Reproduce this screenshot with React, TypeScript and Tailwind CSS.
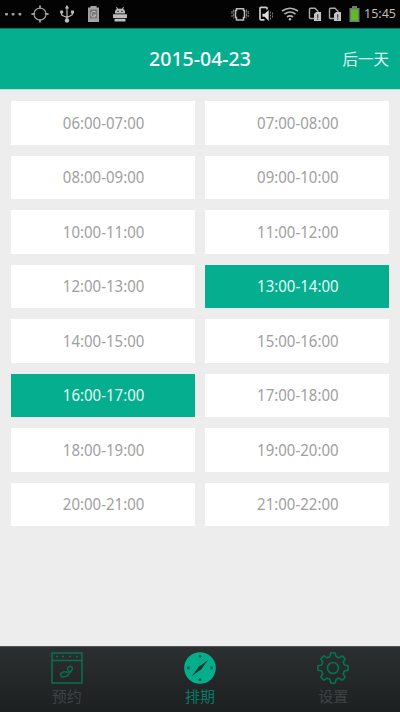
import React from "react";

const slots = [
  "06:00-07:00", "07:00-08:00",
  "08:00-09:00", "09:00-10:00",
  "10:00-11:00", "11:00-12:00",
  "12:00-13:00", "13:00-14:00",
  "14:00-15:00", "15:00-16:00",
  "16:00-17:00", "17:00-18:00",
  "18:00-19:00", "19:00-20:00",
  "20:00-21:00", "21:00-22:00",
];
const booked = new Set(["13:00-14:00", "16:00-17:00"]);

function SimCard() {
  return (
    <svg width="14" height="16" viewBox="0 0 14 16" fill="none">
      <path d="M6 12.500H2.500a1 1 0 0 1-1-1V3.200a1 1 0 0 1 1-1h4.500l3 3V6" stroke="#a8a8a8" strokeWidth="1.400" />
      <path d="M8 6h5v9H6V8z" fill="#c4c4c4" />
      <path d="M9.700 8.300v3.400M9.700 12.600v1.200" stroke="#444" strokeWidth="1.200" />
    </svg>
  );
}

function StatusBar() {
  return (
    <div className="flex h-[28px] shrink-0 items-center bg-[#030303] pl-[5px] pr-[4px] text-[#bdbdbd]">
      <svg width="17" height="18" viewBox="0 0 17 18" fill="#a0a0a0">
        <rect x="0" y="8" width="3" height="2.400" rx=".8" />
        <rect x="6.600" y="8" width="3" height="2.400" rx=".8" />
        <rect x="13.400" y="8" width="3" height="2.400" rx=".8" />
      </svg>
      <svg className="ml-[9px]" width="18" height="18" viewBox="0 0 18 18" fill="none" stroke="#9a9a9a">
        <circle cx="9" cy="9" r="6" strokeWidth="1.200" />
        <path d="M9 .5V4M9 14v3.500M.5 9H4M14 9h3.500" strokeWidth="1.900" />
      </svg>
      <svg className="ml-[10px]" width="16" height="18" viewBox="0 0 16 18" fill="none" stroke="#bbb" strokeWidth="1.200">
        <path d="M8 3v12M2.500 6.500V9q0 1.500 2 2L8 12.500M13.500 7v2q0 1-1.500 1.500L8 12.500" />
        <path d="M8 0l2.200 3.500H5.800z" fill="#bbb" stroke="none" />
        <circle cx="8" cy="15.500" r="2.200" fill="#bbb" stroke="none" />
        <circle cx="2.600" cy="7" r="1.700" fill="#bbb" stroke="none" />
        <path d="M12 5.500h3v3h-3z" fill="#bbb" stroke="none" />
      </svg>
      <svg className="ml-[12px]" width="13" height="18" viewBox="0 0 13 18" fill="none">
        <path d="M1 2.500h2.500V1h6v1.500H12V17H1z" fill="#a4a4a4" />
        <rect x="2.800" y="4.500" width="7.400" height="10.500" fill="#777" />
        <path d="M8.800 7Q5 5.500 4.200 8.500T6 12q2.500.5 2.800-2H6.200" stroke="#c2c2c2" />
        <path d="M3 14.200h7" stroke="#bbb" />
      </svg>
      <svg className="ml-[12px]" width="16" height="18" viewBox="0 0 16 18">
        <path d="M3 8.500V6.300q.3-1.800 2-2.300L4 2.400l.8-.5L6.300 3.700h3.400l1.500-1.800.8.5L11 4q1.700.5 2 2.300v2.200z" fill="#bcbcbc" />
        <path d="M1 9.300h14v3.700H1zM2.500 13.700h11v2.800h-11z" fill="#bcbcbc" />
        <circle cx="6" cy="6.200" r=".8" fill="#222" />
        <circle cx="10" cy="6.200" r=".8" fill="#222" />
      </svg>
      <div className="ml-auto flex items-center">
        <svg width="18" height="18" viewBox="0 0 18 18" fill="none" stroke="#bcbcbc">
          <path d="M5.500 3.800h7v1.800h1v7h-1v2.500h-7v-2.500h-1v-7h1z" strokeWidth="1.500" />
          <path d="M2.600 4.500v9M15.600 4.500v9M1 6v6M17.200 6v6" strokeWidth="1" stroke="#888" strokeDasharray="3 1" />
        </svg>
        <svg className="ml-[9px]" width="16" height="18" viewBox="0 0 16 18" fill="none">
          <path d="M9 4.500V3.300q0-1-1-1H3q-1 0-1 1v10.500q0 1 1 1h3.500" stroke="#ccc" strokeWidth="1.700" />
          <path d="M4.500 8.700h2.200l4-3.700v11l-4-4.200H4.500z" fill="#ddd" />
          <path d="M12.500 6.500v8M14.500 7.500v6" stroke="#777" strokeDasharray="2 1" />
        </svg>
        <svg className="ml-[7px]" width="18" height="16" viewBox="0 0 18 16" fill="none" stroke="#b0b0b0" strokeWidth="1.600">
          <path d="M1 5Q9-.5 17 5M3.500 8Q9 4 14.500 8M6 11q3-2.200 6 0" />
          <circle cx="9" cy="13.300" r="1.200" fill="#b8b8b8" stroke="none" />
        </svg>
        <div className="ml-[9px] flex gap-[6px]"><SimCard /><SimCard /></div>
        <svg className="ml-[7px]" width="11" height="16" viewBox="0 0 11 16">
          <path d="M.5 2H3V0h5v2h2.500v14H.5z" fill="#737b6c" />
          <path d="M2 3.500h7v11H2z" fill="#5dbb28" />
        </svg>
        <span className="ml-[4px] w-[32px] whitespace-nowrap text-[12.500px] leading-[16px]">15:45</span>
      </div>
    </div>
  );
}

function CalendarIcon() {
  return (
    <svg width="32" height="32" viewBox="0 0 32 32" fill="none" stroke="#08704f" strokeWidth="1.500">
      <rect x="1" y="1" width="30" height="30" />
      <path d="M1 8.500h30" />
      <path d="M5 4.500h2M11 4.500h2M18 4.500h2M25 4.500h2" />
      <path d="M17 21C15 18.500 9 20 9.500 23.200c.5 2.600 6.500 2.100 8-.7 1.700-3.300 4.200-3.200 3.800-6.300-.3-2.800-4.500-2.200-4.800.5-.2 2 1.500 3 3.200 2.600" />
    </svg>
  );
}

function CompassIcon() {
  return (
    <svg width="32" height="32" viewBox="0 0 32 32">
      <circle cx="16" cy="16" r="15.800" fill="#04ae8c" />
      <path d="M24.300 7.700 17.200 17.200 7.700 24.300 14.800 14.800z" fill="#18352e" />
      <g fill="#075e4b">
        <circle cx="16" cy="4.300" r="1.400" /><circle cx="16" cy="27.700" r="1.400" />
        <circle cx="4.300" cy="16" r="1.400" /><circle cx="27.700" cy="16" r="1.400" />
      </g>
    </svg>
  );
}

function GearIcon() {
  const teeth = [0, 45, 90, 135, 180, 225, 270, 315];
  const point = (radius: number, degrees: number) => {
    const a = ((degrees - 90) * Math.PI) / 180;
    return `${(16 + radius * Math.cos(a)).toFixed(2)} ${(16 + radius * Math.sin(a)).toFixed(2)}`;
  };
  const outline = teeth
    .map((t, i) => `${i ? "L" : "M"}${point(12.3, t - 13)}L${point(15, t - 9)}Q${point(15.7, t)} ${point(15, t + 9)}L${point(12.3, t + 13)}Q${point(10.8, t + 22.5)} ${point(12.3, t + 32)}`)
    .join("");
  return (
    <svg width="32" height="32" viewBox="0 0 32 32" fill="none" stroke="#08704f" strokeWidth="1.700" strokeLinejoin="round">
      <path d={outline + "Z"} />
      <circle cx="16" cy="16" r="5.500" />
    </svg>
  );
}

function Tab({ label, active, children }: { label: string; active?: boolean; children: React.ReactNode }) {
  return (
    <button className="flex flex-1 flex-col items-center pt-[4.500px]">
      {children}
      <span className={`mt-px text-[15px] leading-[22px] ${active ? "text-[#067b65]" : "text-[#3e4243]"}`}>{label}</span>
    </button>
  );
}

export default function App() {
  return (
    <div className="flex h-[712px] w-[400px] flex-col overflow-hidden bg-[#ededed] font-['Noto_Sans','Noto_Sans_CJK_SC',sans-serif]">
      <StatusBar />
      <header className="grid h-[62px] shrink-0 grid-cols-[1fr_auto_1fr] items-center border-t border-b border-t-[#06755f] border-b-[#b9dfd8] bg-[#04ae8f] px-[11px] text-white">
        <span />
        <h1 className="scale-y-105 text-[19.500px] font-medium leading-6">2015-04-23</h1>
        <button className="justify-self-end text-[15.500px] leading-6 text-[#e0f8f3]">后一天</button>
      </header>
      <main className="grow px-[11px] pt-[11px]">
        <div className="grid grid-cols-2 gap-x-[10.500px] gap-y-[11px]">
          {slots.map((slot) => (
            <button
              key={slot}
              className={`h-[43.560px] pl-[1.500px] text-[15px] ${booked.has(slot) ? "bg-[#04ae8f] text-[#e6faf5]" : "bg-white text-[#a0a0a0]"}`}
            >
              <span className="inline-block scale-y-105">{slot}</span>
            </button>
          ))}
        </div>
      </main>
      <nav className="flex h-[66px] shrink-0 border-t border-[#515655] bg-linear-to-b from-[#2b2f2f] to-[#1c2021]">
        <Tab label="预约"><CalendarIcon /></Tab>
        <Tab label="排期" active><CompassIcon /></Tab>
        <Tab label="设置"><GearIcon /></Tab>
      </nav>
    </div>
  );
}
